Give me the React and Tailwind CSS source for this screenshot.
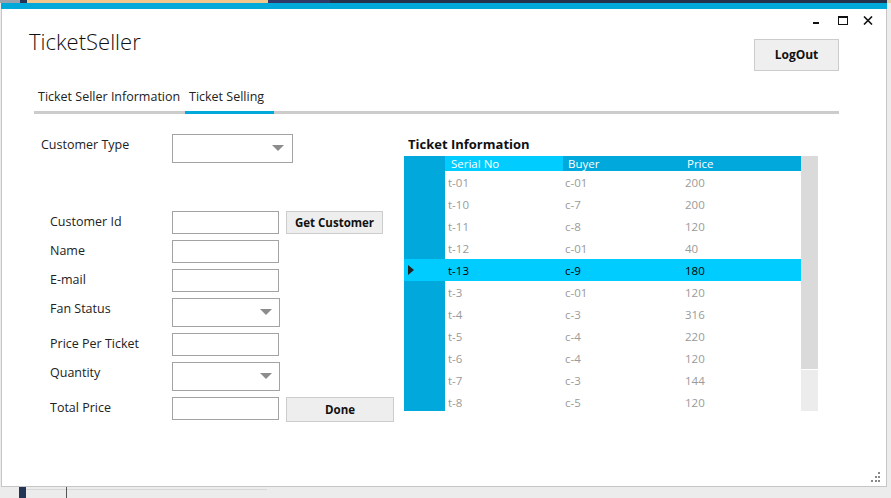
import React from "react";

const rows = [
  ["t-01", "c-01", "200"],
  ["t-10", "c-7", "200"],
  ["t-11", "c-8", "120"],
  ["t-12", "c-01", "40"],
  ["t-13", "c-9", "180", true],
  ["t-3", "c-01", "120"],
  ["t-4", "c-3", "316"],
  ["t-5", "c-4", "220"],
  ["t-6", "c-4", "120"],
  ["t-7", "c-3", "144"],
  ["t-8", "c-5", "120"],
];

function Arrow() {
  return (
    <svg width="12" height="7" viewBox="0 0 12 7" className="shrink-0">
      <polygon points="0,0 12,0 6,6" fill="#8c8c8c" />
    </svg>
  );
}

function Combo({ w, arrowMr }) {
  return (
    <div className={`${w} h-[29px] border border-[#a3a3a3] bg-white flex items-center justify-end`}>
      <div className={arrowMr}>
        <Arrow />
      </div>
    </div>
  );
}

function TextBox() {
  return <div className="w-[107px] h-[23px] border border-[#a3a3a3] bg-white" />;
}

function Label({ children }) {
  return <div className="w-[122px] shrink-0 pt-px text-[12.5px] leading-[20px] text-[#222]">{children}</div>;
}

export default function App() {
  return (
    <div className="w-[891px] h-[498px] overflow-hidden bg-[#ececec] font-['Open_Sans',sans-serif] flex flex-col">
      {/* desktop strip top */}
      <div className="h-[3px] flex shrink-0">
        <div className="w-[20px] bg-[#9aa3ad]" />
        <div className="w-[7px] bg-[#243455]" />
        <div className="w-[241px] bg-[#f0c88c]" />
        <div className="w-[62px] bg-[#2e3968]" />
        <div className="flex-1 bg-[#25324c]" />
        <div className="w-[4px] bg-[#e3cfa3]" />
      </div>

      {/* window */}
      <div className="ml-px w-[886px] h-[484px] shrink-0 bg-white border-l border-r border-b border-[#c6c6c6] flex flex-col">
        <div className="h-[6px] bg-[#01a9db] shrink-0 -mx-px" />

        {/* header */}
        <div className="h-[77px] flex justify-between shrink-0">
          <div className="ml-[27px] mt-[16px] text-[22px] leading-[32px] font-light text-[#111]">
            TicketSeller
          </div>
          <div className="flex flex-col items-end pr-[13px]">
            <div className="mt-[7px] h-[9px] flex items-start gap-[14px]">
              <svg width="10" height="9" viewBox="0 0 10 9" className="mr-[3px]">
                <rect x="2" y="6" width="6" height="2" fill="#111" />
              </svg>
              <svg width="10" height="9" viewBox="0 0 10 9" className="mr-[1px]">
                <rect x="0.5" y="0.5" width="9" height="8" fill="none" stroke="#111" strokeWidth="1" />
                <rect x="0" y="0" width="10" height="2" fill="#111" />
              </svg>
              <svg width="10" height="9" viewBox="0 0 10 9">
                <path d="M1 0.5 L9 8.5 M9 0.5 L1 8.5" stroke="#111" strokeWidth="1.6" />
              </svg>
            </div>
            <button className="mt-[14px] mr-[34px] w-[85px] h-[32px] bg-[#efefef] border border-[#cccccc] text-[12px] font-bold text-[#111] flex items-center justify-center">
              LogOut
            </button>
          </div>
        </div>

        {/* tabs */}
        <div className="ml-[32px] w-[805px] flex border-b-[3px] border-[#cccccc] shrink-0">
          <div className="w-[151px] pl-[4px] pt-px pb-[4px] text-[12.5px] leading-[20px] text-[#222] whitespace-nowrap">
            Ticket Seller Information
          </div>
          <div className="w-[89px] pl-[4px] pt-px pb-[4px] -mb-[3px] border-b-[3px] border-[#01a9db] text-[12.5px] leading-[20px] text-[#222] whitespace-nowrap">
            Ticket Selling
          </div>
        </div>

        {/* body */}
        <div className="flex shrink-0">
          {/* form */}
          <div className="w-[402px] shrink-0 flex flex-col">
            <div className="mt-[20px] pl-[39px] flex">
              <div className="w-[131px] shrink-0 pt-px text-[12.5px] leading-[20px] text-[#222]">Customer Type</div>
              <Combo w="w-[121px]" arrowMr="mr-[8px]" />
            </div>

            <div className="mt-[48px] pl-[48px] flex flex-col gap-[6px]">
              <div className="flex">
                <Label>Customer Id</Label>
                <TextBox />
                <button className="ml-[7px] w-[97px] h-[23px] bg-[#eeeeee] border border-[#cccccc] text-[11.5px] font-bold text-[#111] flex items-center justify-center">
                  Get Customer
                </button>
              </div>
              <div className="flex">
                <Label>Name</Label>
                <TextBox />
              </div>
              <div className="flex">
                <Label>E-mail</Label>
                <TextBox />
              </div>
              <div className="flex">
                <Label>Fan Status</Label>
                <Combo w="w-[108px]" arrowMr="mr-[7px]" />
              </div>
              <div className="flex">
                <Label>Price Per Ticket</Label>
                <TextBox />
              </div>
              <div className="flex">
                <Label>Quantity</Label>
                <Combo w="w-[108px]" arrowMr="mr-[7px]" />
              </div>
              <div className="flex">
                <Label>Total Price</Label>
                <TextBox />
                <button className="ml-[7px] w-[108px] h-[25px] bg-[#eeeeee] border border-[#cccccc] text-[11.5px] font-bold text-[#111] flex items-center justify-center">
                  Done
                </button>
              </div>
            </div>
          </div>

          {/* table */}
          <div className="flex flex-col">
            <div className="mt-[20px] pl-[4px] text-[13px] leading-[20px] font-bold text-[#111]">Ticket Information</div>
            <div className="mt-[2px] w-[414px] h-[255px] flex overflow-hidden">
              <div className="w-[397px] flex flex-col">
                <div className="h-[15px] flex shrink-0 text-[11.5px] leading-[15px] text-white">
                  <div className="w-[41px] bg-[#00a8dc]" />
                  <div className="w-[118px] bg-[#00ccff] pl-[6px]">Serial No</div>
                  <div className="w-[119px] bg-[#00a8dc] pl-[5px]">Buyer</div>
                  <div className="flex-1 bg-[#00a8dc] pl-[5px]">Price</div>
                </div>
                {rows.map(([s, b, p, sel]) => (
                  <div
                    key={s}
                    className={`h-[22px] flex shrink-0 items-center pt-[2px] text-[11.5px] ${sel ? "bg-[#00ccff] text-[#000]" : "text-[#9a9a9a]"}`}
                  >
                    <div className={`w-[41px] h-[22px] -mt-[2px] flex items-center pl-[4px] ${sel ? "" : "bg-[#00a8dc]"}`}>
                      {sel && (
                        <svg width="6" height="10" viewBox="0 0 6 10">
                          <polygon points="0,0 6,5 0,10" fill="#222" />
                        </svg>
                      )}
                    </div>
                    <div className="w-[118px] pl-[3px]">{s}</div>
                    <div className="w-[119px] pl-[2px]">{b}</div>
                    <div className="flex-1 pl-[3px]">{p}</div>
                  </div>
                ))}
              </div>
              <div className="w-[17px] flex flex-col">
                <div className="h-[213px] bg-[#dadada]" />
                <div className="h-px bg-white" />
                <div className="flex-1 bg-[#ececec]" />
              </div>
            </div>
          </div>
        </div>

        {/* grip */}
        <div className="mt-auto flex justify-end pr-[5px] pb-[4px]">
          <svg width="10" height="10" viewBox="0 0 10 10">
            <rect x="7" y="0" width="2" height="2" fill="#8a8a8a" />
            <rect x="4" y="4" width="2" height="2" fill="#8a8a8a" />
            <rect x="7" y="4" width="2" height="2" fill="#8a8a8a" />
            <rect x="0" y="8" width="2" height="2" fill="#8a8a8a" />
            <rect x="4" y="8" width="2" height="2" fill="#8a8a8a" />
            <rect x="7" y="8" width="2" height="2" fill="#8a8a8a" />
          </svg>
        </div>
      </div>

      {/* desktop strip bottom */}
      <div className="flex-1 flex">
        <div className="ml-[19px] w-[7px] bg-[#243455]" />
        <div className="w-[40px] border-t border-[#d8d8d8] mt-[2px]" />
        <div className="w-px bg-[#555]" />
        <div className="w-[200px] mt-[2px] border-t border-[#d8d8d8]" />
      </div>
    </div>
  );
}
